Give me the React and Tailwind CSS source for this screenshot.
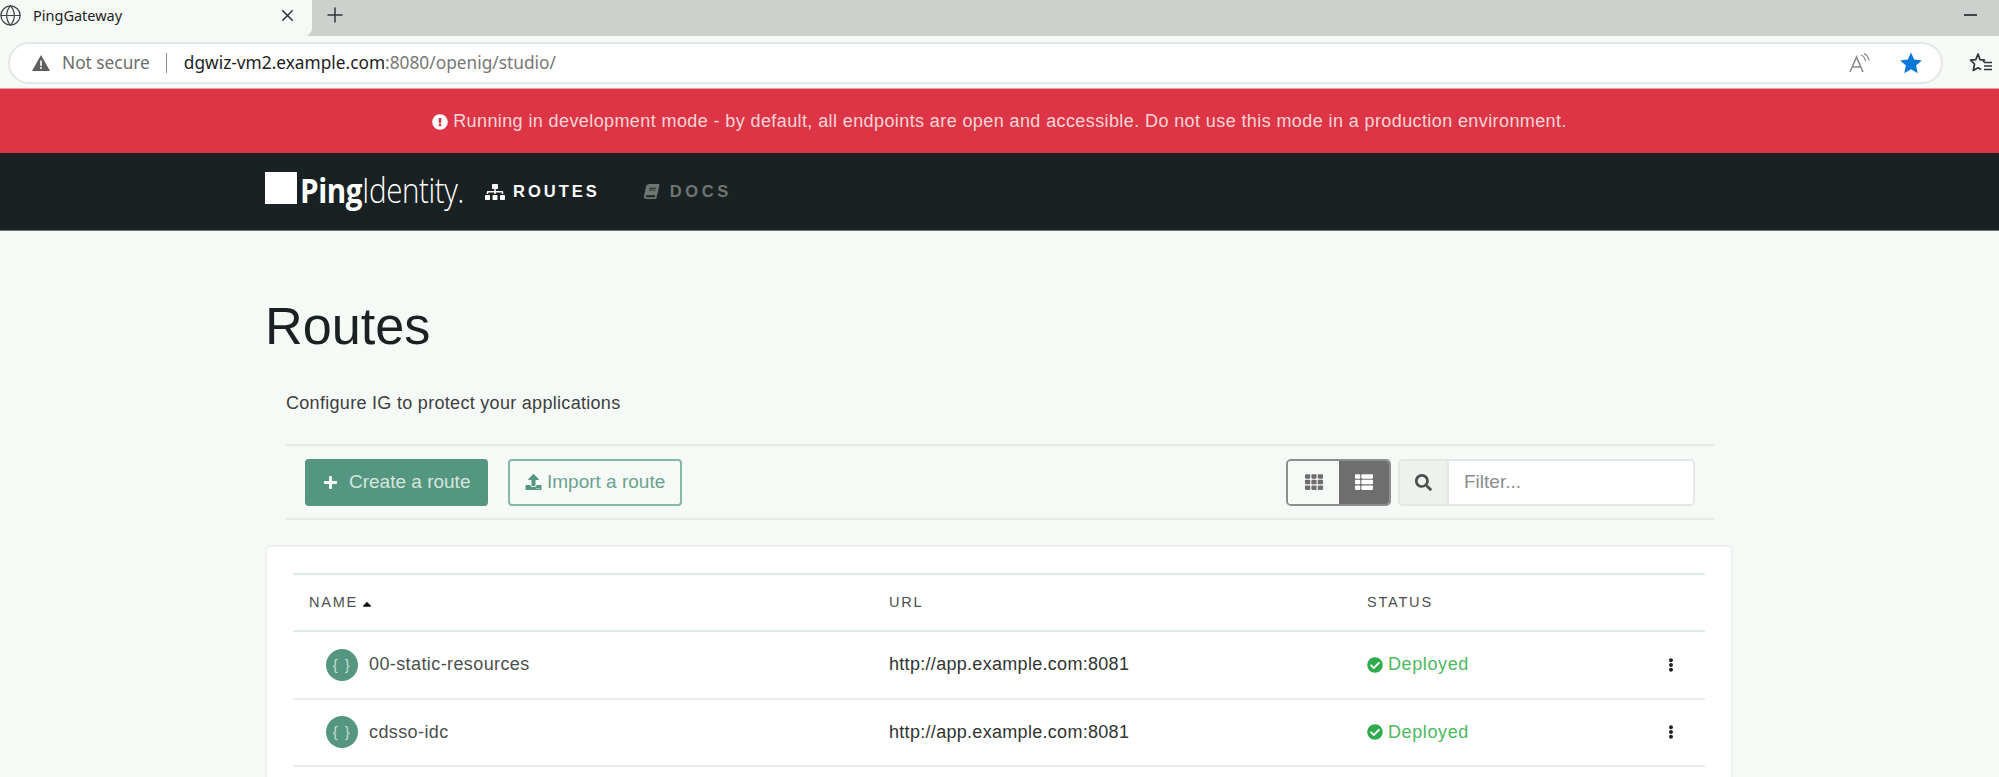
import { FaBook, FaCaretUp, FaCheckCircle, FaEllipsisV, FaExclamationCircle, FaPlus, FaSearch, FaSitemap, FaTh, FaThList, FaUpload } from "react-icons/fa";
import { Globe, Plus, X } from "lucide-react";

const routes = [
  { name: "00-static-resources", url: "http://app.example.com:8081" },
  { name: "cdsso-idc", url: "http://app.example.com:8081" },
];

function BrowserChrome() {
  return (
    <div className="font-['Noto_Sans',sans-serif] shrink-0">
      {/* Tabs */}
      <div className="flex h-[36px] bg-[#cdd1cd]">
        <div className="flex items-center w-[312px] h-full pb-[5px] bg-[#f5faf6] rounded-br-[8px] text-[14.5px] text-[#222]">
          <Globe className="w-[23px] h-[23px] text-[#444] ml-[-1px]" strokeWidth={1.3} />
          <span className="ml-[11px]">PingGateway</span>
          <X className="w-[19px] h-[19px] text-[#333] ml-auto mr-[15px]" strokeWidth={2} />
        </div>
        <div className="flex items-center flex-1 pb-[7px]">
          <Plus className="w-[24px] h-[24px] text-[#333] ml-[11px]" strokeWidth={1.5} />
          <div className="ml-auto mr-[22px] w-[13px] h-[2px] bg-[#444]" />
        </div>
      </div>
      {/* Address bar */}
      <div className="flex items-center h-[53px] pt-[2px] bg-[#f5faf6] border-b border-[#e6a0a6]">
        <div className="flex items-center ml-[8px] w-[1935px] h-[42px] bg-white border-2 border-[#e4e8e5] rounded-full text-[17.3px]">
          <svg viewBox="0 0 20 18" className="w-[20px] h-[18px] ml-[21px]">
            <path d="M10 1 L19 17 H1 Z" fill="#5c5f5c" />
            <rect x="9.2" y="6.5" width="1.6" height="5.5" fill="#fff" />
            <rect x="9.2" y="13" width="1.6" height="1.8" fill="#fff" />
          </svg>
          <span className="ml-[11px] text-[#6b6e6b]">Not secure</span>
          <span className="ml-[16px] w-px h-[20px] bg-[#8a8d8a]" />
          <span className="ml-[17px] text-[#1c1c1c]">dgwiz-vm2.example.com<span className="text-[#777]">:8080/openig/studio/</span></span>
          <svg viewBox="0 0 24 20" className="w-[24px] h-[20px] ml-auto mr-[27px] text-[#8a8a8a]" fill="none" stroke="currentColor" strokeWidth="1.6">
            <path d="M2 19 L8.5 4 L15 19 M4.5 14 H12.5" />
            <path d="M13 2 C15.5 3 17 5 17.5 8 M16 0.5 C19 2 20.5 4.5 21 7.5" strokeWidth="1.3" />
          </svg>
          <svg viewBox="0 0 24 24" className="w-[24px] h-[24px] mr-[18px]">
            <path d="M12 1.5 L15.2 8.6 L22.8 9.4 L17.1 14.6 L18.7 22.2 L12 18.3 L5.3 22.2 L6.9 14.6 L1.2 9.4 L8.8 8.6 Z" fill="#0a78d8" />
          </svg>
        </div>
        <svg viewBox="0 0 24 24" className="w-[24px] h-[24px] ml-[26px]" fill="none" stroke="#333" strokeWidth="1.7">
          <path d="M14 11 L15.5 9.2 L11 8.6 L9 3 L6.8 8.6 L1.5 9.2 L5.5 13 L4.3 19.5 L9 16.8 L12 18.5" strokeLinejoin="round" />
          <path d="M15 11.5 H23 M15 15 H23 M15 18.5 H23" />
        </svg>
      </div>
    </div>
  );
}

function NavBar() {
  return (
    <nav className="flex items-center shrink-0 h-[78px] bg-[#1a2123] pl-[265px] border-b border-[#6f7573]">
      <div className="w-[32px] h-[32px] mb-[7px] bg-white" />
      <div className="w-[166px] ml-[3px] mb-[4px] h-[40px] text-white text-[34px] leading-[40px] tracking-[-0.5px] font-['Open_Sans',sans-serif] whitespace-nowrap">
        <span className="inline-block origin-left scale-x-[0.87]">
          <span className="font-bold">Ping</span><span className="font-light">Identity.</span>
        </span>
      </div>
      <div className="flex items-center ml-[19px] text-white text-[16.5px] font-bold tracking-[3px]">
        <FaSitemap className="w-[20px] h-[16px] mr-[8px]" />
        ROUTES
      </div>
      <div className="flex items-center ml-[43px] text-[#6f7573] text-[16.5px] font-bold tracking-[3.6px]">
        <FaBook className="w-[17px] h-[15px] mr-[10px] -skew-x-12" />
        DOCS
      </div>
    </nav>
  );
}

function Toolbar() {
  return (
    <div className="flex items-center h-[76px] border-y-2 border-[#e6eae7] px-[19px] mt-[30px]">
      <button className="flex items-center w-[183px] h-[47px] pl-[18px] bg-[#559680] rounded-[4px] text-[#d5e6df] text-[19px]">
        <FaPlus className="w-[15px] h-[15px] text-white mr-[11px]" />
        Create a route
      </button>
      <button className="flex items-center w-[174px] h-[47px] pl-[15px] ml-[20px] border-2 border-[#86b8a8] rounded-[4px] text-[#6ba28f] text-[19px]">
        <FaUpload className="w-[17px] h-[16px] text-[#559680] mr-[5px]" />
        Import a route
      </button>
      <div className="flex ml-auto w-[105px] h-[47px] rounded-[5px] border-2 border-[#8b8e8c] overflow-hidden">
        <div className="flex items-center justify-center w-[51px] bg-[#f6faf7] text-[#6e6e6e]"><FaTh className="w-[18px] h-[18px]" /></div>
        <div className="flex items-center justify-center flex-1 bg-[#6e6e6e] text-white"><FaThList className="w-[18px] h-[18px]" /></div>
      </div>
      <div className="flex ml-[7px] w-[297px] h-[47px] rounded-[5px] border-2 border-[#e4e8e5] overflow-hidden">
        <div className="flex items-center justify-center w-[49px] bg-[#eef2ef] border-r-2 border-[#e4e8e5] text-[#4a4f4c]"><FaSearch className="w-[17px] h-[17px]" /></div>
        <div className="flex items-center flex-1 bg-white pl-[15px] text-[#8a8d8b] text-[19px]">Filter...</div>
      </div>
    </div>
  );
}

function RouteRow({ route }) {
  return (
    <div className="flex items-center h-[67.5px] border-b-2 border-[#e8ecea] text-[18px]">
      <div className="flex items-center w-[596px] pl-[33px]">
        <span className="flex items-center justify-center w-[32px] h-[32px] rounded-full bg-[#559680] text-[#c4ddd3] text-[15px] tracking-[1.5px]">{"{ }"}</span>
        <span className="ml-[11px] text-[#4b4f4d] tracking-[0.4px]">{route.name}</span>
      </div>
      <div className="w-[478px] text-[#303432] tracking-[0.3px]">{route.url}</div>
      <div className="flex items-center text-[#4cb963] tracking-[0.6px]">
        <FaCheckCircle className="w-[16px] h-[16px] text-[#2fab4c] mr-[5px]" />
        Deployed
      </div>
      <FaEllipsisV className="w-[14px] h-[14px] text-[#222] ml-auto mr-[27px]" />
    </div>
  );
}

export default function App() {
  return (
    <div className="flex flex-col h-[777px] overflow-hidden bg-[#f6faf7] font-['Liberation_Sans',sans-serif]">
      <BrowserChrome />
      <div className="flex items-center justify-center shrink-0 h-[64px] pt-[1px] bg-[#dd3545] text-[#f5d5d8] text-[18px] tracking-[0.4px]">
        <FaExclamationCircle className="w-[16px] h-[16px] text-white mr-[5px]" />
        Running in development mode - by default, all endpoints are open and accessible. Do not use this mode in a production environment.
      </div>
      <NavBar />

      <main className="w-[1468px] ml-[265px]">
        <h1 className="mt-[66px] text-[#1a2123] text-[52.2px] leading-[58px]">Routes</h1>
        <div className="mx-[21px] mr-[19px]">
          <p className="mt-[36px] text-[#3c403e] text-[18px] leading-[24px] tracking-[0.3px]">Configure IG to protect your applications</p>
        </div>
        <div className="ml-[21px] mr-[19px] mt-[-1px]">
          <Toolbar />
        </div>

        <div className="mt-[25px] bg-white border-2 border-[#eef1ef] rounded-[5px] px-[26px] pt-[26px] pb-[60px]">
          <div className="flex items-center h-[59px] border-y-2 border-[#e3ebe8] text-[#4b4f4d] text-[14.5px] tracking-[1.8px]">
            <div className="flex items-center w-[596px] pl-[16px]">
              NAME
              <FaCaretUp className="w-[14px] h-[14px] text-[#111] ml-[2px] mt-[3px]" />
            </div>
            <div className="w-[478px]">URL</div>
            <div>STATUS</div>
          </div>
          {routes.map((r) => <RouteRow key={r.name} route={r} />)}
        </div>
      </main>
    </div>
  );
}
